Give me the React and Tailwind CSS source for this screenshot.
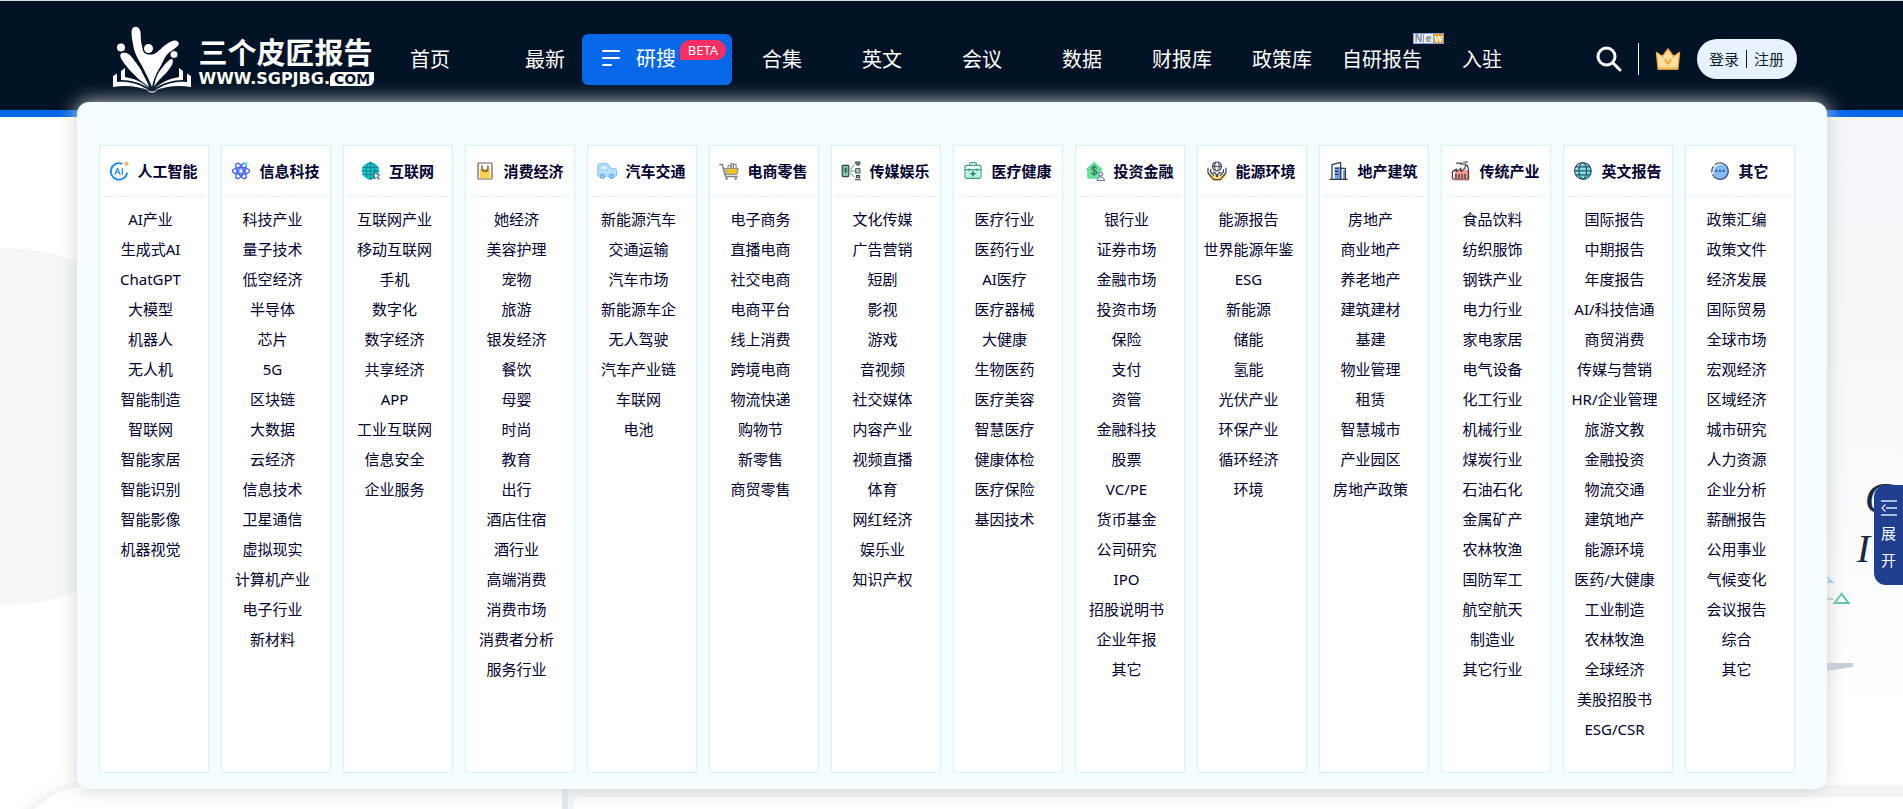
import React from 'react';

const Icon = ({ children }) => (
  <svg className="h-5 w-5 shrink-0" viewBox="0 0 20 20" fill="none" strokeLinecap="round" strokeLinejoin="round">
    {children}
  </svg>
);

const AiIcon = () => (
  <Icon>
    <path d="M12.600 2.600A8.200 8.200 0 1 0 18 12.400" stroke="#1a86f8" strokeWidth="1.900" />
    <path d="M6 13.200L8.200 7.400h.6l2.200 5.800M6.800 11.400h3.400M13.400 7.400v5.800" stroke="#3a97f7" strokeWidth="1.400" />
    <path d="M17.600.4l.7 1.600 1.500.8-1.500.8-.7 1.600-.8-1.600-1.600-.8 1.600-.8z" fill="#fba832" stroke="#fba832" strokeWidth=".5" />
  </Icon>
);

const AtomIcon = () => (
  <Icon>
    <g stroke="#4a69f5" strokeWidth="1.500">
      <ellipse cx="10" cy="10" rx="8.600" ry="3.400" />
      <ellipse cx="10" cy="10" rx="8.600" ry="3.400" transform="rotate(60 10 10)" />
      <ellipse cx="10" cy="10" rx="8.600" ry="3.400" transform="rotate(120 10 10)" />
    </g>
    <circle cx="10" cy="10" r="2.200" fill="#fff" stroke="#4a69f5" strokeWidth="1" />
    <circle cx="15" cy="2.800" r="1.800" fill="#6ff0dc" />
  </Icon>
);

const WebIcon = () => (
  <Icon>
    <circle cx="9.500" cy="9.800" r="8.600" fill="#12c6cd" />
    <g stroke="#137f88" strokeWidth="1">
      <path d="M1.600 6.400h15.800M1 10h17M1.600 13.600h15.800M9.500 1.400v17" />
      <ellipse cx="9.500" cy="9.800" rx="4.400" ry="8.400" />
    </g>
    <path d="M13.200 12l5.600 2.400-2.200.9 2 2.600-1 .8-2-2.700-1.500 1.800z" fill="#fff" stroke="#56606b" strokeWidth=".9" />
  </Icon>
);

const BagIcon = () => (
  <Icon>
    <rect x="3" y="2" width="14" height="16" rx=".8" fill="#fffaf0" stroke="#7b5b57" strokeWidth="1.200" />
    <path d="M5 8h10v9.200H5z" fill="#ffcf4d" />
    <path d="M7 5v2.500c0 3.600 6 3.600 6 0V5" stroke="#6a4b47" strokeWidth="1.300" />
  </Icon>
);

const CarIcon = () => (
  <Icon>
    <path d="M.8 14V4.400c0-1.200.6-2 1.800-2h7.200c1 0 1.500.5 2 1.400l2 3.600h3.400c1.400 0 2.300.8 2.300 2.200v4.600c0 .6-.4 1-1 1H2c-.8 0-1.200-.5-1.200-1.200z" fill="#b8defe" stroke="#7fc1fb" strokeWidth="1" />
    <path d="M3.600 4.800h5.600l2 3.800H3.600z" fill="#eaf6ff" stroke="#8ccaff" strokeWidth=".8" />
    <circle cx="5.400" cy="15.200" r="2.600" fill="#62b0fa" />
    <circle cx="14.600" cy="15.200" r="2.600" fill="#62b0fa" />
    <circle cx="5.400" cy="15.200" r=".9" fill="#d9eeff" />
    <circle cx="14.600" cy="15.200" r=".9" fill="#d9eeff" />
  </Icon>
);

const CartIcon = () => (
  <Icon>
    <path d="M.8 3.600h2.600l3.200 12h11.600" stroke="#84807d" strokeWidth="1.500" />
    <path d="M4.400 7.400h14.800v1.200L18 13.400H6z" fill="#b5afa9" stroke="#77716c" strokeWidth=".7" />
    <path d="M8 8h9.600v4.400H8z" fill="#f6c416" />
    <path d="M9 7V4.400h3.200V7M12 6.800V2.600h2.400v4.200M14.600 7V3.400h2.600V7" stroke="#6b6662" strokeWidth=".8" fill="#f1efec" />
    <circle cx="7.600" cy="17.600" r="1.300" fill="#8b8682" />
    <circle cx="16.800" cy="17.600" r="1.300" fill="#8b8682" />
  </Icon>
);

const MediaIcon = () => (
  <Icon>
    <rect x="1.200" y="4.400" width="6.600" height="11.200" rx=".8" fill="#7fc9a5" stroke="#2f4a43" strokeWidth="1.200" />
    <path d="M3 8h3M3 10.200h3M4.600 7v4.600" stroke="#2f4a43" strokeWidth=".8" />
    <path d="M9.600 10h3.400M9.600 8l3.600-4M9.600 12.200l3.600 4" stroke="#5c6b66" strokeWidth="1" strokeDasharray="1.400 1" />
    <path d="M14.800.9h4.200v2l-2.100 1.800-2.100-1.800z" fill="#5f8677" stroke="#36413d" strokeWidth=".8" />
    <rect x="15" y="7.600" width="4" height="4.400" fill="#9fd8bd" stroke="#36413d" strokeWidth=".9" />
    <path d="M15.400 14.600h3.200v2.200h-3.200zM14.200 18.800h5.600" fill="#9fd8bd" stroke="#36413d" strokeWidth="1.100" />
  </Icon>
);

const MedicalIcon = () => (
  <Icon>
    <path d="M3.400 9h13.200v8.600H3.400z" fill="#b9f0e2" />
    <rect x="2" y="4.400" width="16" height="13" rx="1.800" stroke="#419e8d" strokeWidth="1.200" />
    <path d="M6.600 4.200V3c0-.8.5-1.400 1.300-1.400h4.200c.8 0 1.300.6 1.300 1.400v1.200M2 8.600h16M6 7.600v2M14 7.600v2" stroke="#419e8d" strokeWidth="1.200" />
    <path d="M10 10.800v4M8 12.800h4" stroke="#23806f" strokeWidth="1.500" />
  </Icon>
);

const FinanceIcon = () => (
  <Icon>
    <path d="M9 .8l9 7.400-1.800 1.600v6.800c0 .8-.5 1.200-1.200 1.200H3.400c-.8 0-1.200-.5-1.200-1.200V9.800L.4 8.400z" fill="#67e09c" />
    <path d="M11.600 7.200c-.5-1-1.400-1.400-2.400-1.400-1.400 0-2.400.7-2.400 1.800 0 2.700 5 1.200 5 4 0 1.100-1.100 1.800-2.600 1.800-1.200 0-2.200-.5-2.700-1.500M9.200 4.600v10" stroke="#3f6f62" strokeWidth="1.200" />
    <circle cx="15.800" cy="13" r="1.900" fill="#eef1fa" stroke="#56608a" strokeWidth=".9" />
    <path d="M12.200 19.200c0-4.600 7.200-4.600 7.200 0z" fill="#eef1fa" stroke="#56608a" strokeWidth=".9" />
  </Icon>
);

const EnergyIcon = () => (
  <Icon>
    <path d="M2 12l5 2.400h6l5-2.400 1 3-4 4.400H5.600L1.400 15z" fill="#ffd772" />
    <circle cx="10" cy="5.400" r="4.400" fill="#e6e9f4" stroke="#3d4056" strokeWidth="1.200" />
    <path d="M5.800 5.400h8.400M8.400 1.400c-1 2.400-1 5.600 0 8M11.600 1.400c1 2.400 1 5.600 0 8" stroke="#3d4056" strokeWidth=".9" />
    <path d="M1 7v5l5 5.600M3.600 8.600v2.400l3.200 3.400M19 7v5l-5 5.600M16.400 8.600v2.400l-3.200 3.400M6.400 11.400c1.800.4 3.200 2 3.200 4M13.600 11.400c-1.800.4-3.200 2-3.200 4M6.400 18.600h7.200" stroke="#3d4056" strokeWidth="1.200" />
  </Icon>
);

const BuildingIcon = () => (
  <Icon>
    <path d="M5.600 6h7v12h-7zM14 9h3v9h-3z" fill="#6fa0f4" />
    <path d="M3 18V3.600l8.600-2.200V18M11.600 7.400h4.800V18" stroke="#3a3f4c" strokeWidth="1.300" />
    <path d="M6.400 7.400h2.600M6.400 10.400h2.600M6.400 13.400h2.600M1 18.400h17" stroke="#333845" strokeWidth="1.300" />
  </Icon>
);

const FactoryIcon = () => (
  <Icon>
    <path d="M4 9h14.400v10.400H3z" fill="#f79c86" />
    <path d="M1.400 18V10.600c2-.4 3-2 4-2.600v2.600l4.400-3.400v3.400l4-3 .6-3h2.200l.8 4.400V18z" stroke="#46394f" strokeWidth="1.200" />
    <path d="M5 13.400v3M8 13.400v3M11 13.400v3M14 13.400v3" stroke="#46394f" strokeWidth="1.400" />
    <path d="M5.600 2.400c1.800-1.600 2.800 1 4.600-.4M10.200 3.400c1.800-1.600 3 1 5-.6M12.600 1h4" stroke="#46394f" strokeWidth="1.100" />
  </Icon>
);

const GlobeIcon = () => (
  <Icon>
    <circle cx="11" cy="11" r="8.200" fill="#7fe3e6" />
    <circle cx="9.800" cy="9.800" r="8.200" stroke="#33506a" strokeWidth="1.300" />
    <ellipse cx="9.800" cy="9.800" rx="3.800" ry="8.200" stroke="#33506a" strokeWidth="1.200" />
    <path d="M3 5.800h13.600M1.600 9.800h16.400M3 13.800h13.600" stroke="#33506a" strokeWidth="1.200" />
  </Icon>
);

const ChatIcon = () => (
  <Icon>
    <circle cx="11" cy="11.200" r="7.600" fill="#84bdfb" />
    <path d="M5.400 3.400a8.200 8.200 0 1 1-2.800 10.200M1.800 11a8.200 8.200 0 0 1 1.400-5.400" stroke="#4b5170" strokeWidth="1.300" />
    <g fill="#3b4168">
      <circle cx="6.400" cy="9.800" r="1.100" />
      <circle cx="10" cy="9.800" r="1.100" />
      <circle cx="13.600" cy="9.800" r="1.100" />
    </g>
  </Icon>
);

const categories = [
  { title: '人工智能', icon: AiIcon, items: ['AI产业', '生成式AI', 'ChatGPT', '大模型', '机器人', '无人机', '智能制造', '智联网', '智能家居', '智能识别', '智能影像', '机器视觉'] },
  { title: '信息科技', icon: AtomIcon, items: ['科技产业', '量子技术', '低空经济', '半导体', '芯片', '5G', '区块链', '大数据', '云经济', '信息技术', '卫星通信', '虚拟现实', '计算机产业', '电子行业', '新材料'] },
  { title: '互联网', icon: WebIcon, items: ['互联网产业', '移动互联网', '手机', '数字化', '数字经济', '共享经济', 'APP', '工业互联网', '信息安全', '企业服务'] },
  { title: '消费经济', icon: BagIcon, items: ['她经济', '美容护理', '宠物', '旅游', '银发经济', '餐饮', '母婴', '时尚', '教育', '出行', '酒店住宿', '酒行业', '高端消费', '消费市场', '消费者分析', '服务行业'] },
  { title: '汽车交通', icon: CarIcon, items: ['新能源汽车', '交通运输', '汽车市场', '新能源车企', '无人驾驶', '汽车产业链', '车联网', '电池'] },
  { title: '电商零售', icon: CartIcon, items: ['电子商务', '直播电商', '社交电商', '电商平台', '线上消费', '跨境电商', '物流快递', '购物节', '新零售', '商贸零售'] },
  { title: '传媒娱乐', icon: MediaIcon, items: ['文化传媒', '广告营销', '短剧', '影视', '游戏', '音视频', '社交媒体', '内容产业', '视频直播', '体育', '网红经济', '娱乐业', '知识产权'] },
  { title: '医疗健康', icon: MedicalIcon, items: ['医疗行业', '医药行业', 'AI医疗', '医疗器械', '大健康', '生物医药', '医疗美容', '智慧医疗', '健康体检', '医疗保险', '基因技术'] },
  { title: '投资金融', icon: FinanceIcon, items: ['银行业', '证券市场', '金融市场', '投资市场', '保险', '支付', '资管', '金融科技', '股票', 'VC/PE', '货币基金', '公司研究', 'IPO', '招股说明书', '企业年报', '其它'] },
  { title: '能源环境', icon: EnergyIcon, items: ['能源报告', '世界能源年鉴', 'ESG', '新能源', '储能', '氢能', '光伏产业', '环保产业', '循环经济', '环境'] },
  { title: '地产建筑', icon: BuildingIcon, items: ['房地产', '商业地产', '养老地产', '建筑建材', '基建', '物业管理', '租赁', '智慧城市', '产业园区', '房地产政策'] },
  { title: '传统产业', icon: FactoryIcon, items: ['食品饮料', '纺织服饰', '钢铁产业', '电力行业', '家电家居', '电气设备', '化工行业', '机械行业', '煤炭行业', '石油石化', '金属矿产', '农林牧渔', '国防军工', '航空航天', '制造业', '其它行业'] },
  { title: '英文报告', icon: GlobeIcon, items: ['国际报告', '中期报告', '年度报告', 'AI/科技信通', '商贸消费', '传媒与营销', 'HR/企业管理', '旅游文教', '金融投资', '物流交通', '建筑地产', '能源环境', '医药/大健康', '工业制造', '农林牧渔', '全球经济', '美股招股书', 'ESG/CSR'] },
  { title: '其它', icon: ChatIcon, items: ['政策汇编', '政策文件', '经济发展', '国际贸易', '全球市场', '宏观经济', '区域经济', '城市研究', '人力资源', '企业分析', '薪酬报告', '公用事业', '气候变化', '会议报告', '综合', '其它'] },
];

const navItems = ['合集', '英文', '会议', '数据', '财报库', '政策库', '自研报告', '入驻'];

const Logo = () => (
  <a href="#" className="flex items-center text-white">
    <svg className="h-[67px] w-[78px] shrink-0" viewBox="0 0 78 67" fill="#fff">
      <path d="M18.500 6C18.500-1 26.500-1 27.500 6c.5 5 0 9 1.500 14 1.500 6 6 9 10 8.500 4-.5 8-5 12-8.500 4-3 7-5 10-5.500 4-.5 6 2.500 4 5-2 3-7 5-10 8-3 3-5 8-7.500 13C44 46 41 52 39 61c-3-8-7-15-10.500-22C24 31 21 26 20 18c-.8-4-1.500-8-1.500-12z" />
      <circle cx="35.500" cy="22.500" r="5.200" stroke="#001225" strokeWidth="1.400" />
      <circle cx="8" cy="21.500" r="4" />
      <circle cx="61" cy="28.500" r="3.800" stroke="#001225" strokeWidth=".6" />
      <path d="M7 28c3-3.500 9-2 13 4 5 7 8 10 10.500 16 2.500 5 5 9 6.500 14-5-4-9-6-13-10-5-5-9-9-12-13-3-4-6-8-5-11z" stroke="#001225" strokeWidth="1" />
      <path d="M59.500 32.500c2 3 0 7-2.500 10-2.500 4-5 6-8 9-4 4-6 7-8.500 10.500.5-6 2-11 5-16 3-4 5-7 8-10 2-2 4-4 6-3.500z" stroke="#001225" strokeWidth="1" />
      <path d="M0 50l4-2.500v8.500c12-1.500 23 2 33 9C26 60 12 59 0 61zM8 45l4-3v9c9 1.500 17 5 24 11-8-5-18-8-28-8zM78 50l-4-2.500v8.500c-12-1.500-23 2-33 9 11-5 25-6 37-4zM70 45l-4-3v9c-9 1.500-17 5-24 11 8-5 18-8 28-8z" />
      <path d="M34 64.500c3 1.200 7 1.200 10 0l-3 2h-4z" />
    </svg>
    <span className="mt-1 ml-2 flex flex-col">
      <span className="whitespace-nowrap text-[29px] leading-9 font-bold">三个皮匠报告</span>
      <span className="flex items-center whitespace-nowrap font-['DejaVu_Sans'] text-base leading-4 font-bold">
        WWW.SGPJBG.
        <span className="rounded-tl-md rounded-br-md bg-white px-1 text-sm leading-[14px] text-[#001225]">COM</span>
      </span>
    </span>
  </a>
);

const Header = () => (
  <header className="h-[117px] border-t border-b-[7px] border-t-[#dcdfdf] border-b-[#0767e9] bg-[#001225] text-white">
    <div className="mx-auto flex h-[116px] max-w-[1690px] items-center justify-between">
      <div className="ml-[6px] flex items-center">
        <Logo />
        <nav className="ml-1 flex items-center text-center text-xl leading-[51px] whitespace-nowrap">
          <a href="#" className="w-[104px]">首页</a>
          <a href="#" className="w-[100px] pl-[26px]">最新</a>
          <a href="#" className="relative flex w-[150px] items-center rounded-md bg-[#0767e9] pb-[2px] pl-5 leading-[49px]">
            <svg className="mr-4 h-[18px] w-[18px]" viewBox="0 0 18 18" stroke="#fff" strokeWidth="2" strokeLinecap="round">
              <path d="M1 2h16M1 9h16M1 16h8" />
            </svg>
            研搜
            <span className="absolute top-[6px] right-[6px] rounded-t-full rounded-br-full bg-[#ff2f63] px-2 text-[13px] leading-5">BETA</span>
          </a>
          {navItems.map(item => (
            <a key={item} href="#" className="relative w-[100px]">
              {item}
              {item === '自研报告' && (
                <span className="absolute -top-px -right-3 flex h-[11px] w-[31px] border border-[#7ba3d6] bg-[#7ba3d6] text-[10px] leading-[8px] font-bold">
                  <span className="flex-1 bg-[#eef0f3] text-[#8b9096]">N</span>
                  <span className="mx-px flex-1 bg-[#eef0f3] text-[#8b9096]">e</span>
                  <span className="flex-1 bg-[#f5a01d]">w</span>
                </span>
              )}
            </a>
          ))}
        </nav>
      </div>
      <div className="flex items-center">
        <button aria-label="搜索">
          <svg className="h-[26px] w-[26px]" viewBox="0 0 26 26" fill="none" stroke="#fff" strokeWidth="3" strokeLinecap="round">
            <circle cx="10.500" cy="10.500" r="8.500" />
            <path d="M17 17l7 7" />
          </svg>
        </button>
        <span className="ml-4 h-8 w-px bg-white" />
        <a href="#" aria-label="会员" className="ml-4">
          <svg className="h-6 w-[26px]" viewBox="0 0 26 24" strokeLinejoin="round">
            <path d="M1.500 5.500l6 4L13 2l5.500 7.500 6-4L22.800 22H3.200z" fill="#ffdf9f" stroke="#e9aa4b" strokeWidth="1.500" />
            <path d="M3 20.500h20v2H3z" fill="#f5b544" />
            <path d="M10 12.500l3 4.500 3-4.500" fill="none" stroke="#f0a92f" strokeWidth="1.800" strokeLinecap="round" />
          </svg>
        </a>
        <button className="ml-4 flex h-10 w-[100px] items-center justify-center rounded-full bg-[#e8f2fe] text-[15px] whitespace-nowrap text-[#0d1a2c]">
          登录<span className="mx-[7px] h-[18px] w-px bg-[#0d1a2c]" />注册
        </button>
      </div>
    </div>
  </header>
);

const CategoryCard = ({ title, icon: TitleIcon, items }) => (
  <section className="border border-[#d2f3f9] bg-white px-1 pb-7 text-center text-[15px] whitespace-nowrap text-[#00002e]">
    <h2 className="mb-[7px] flex h-[51px] items-center justify-center gap-2 border-b border-dashed border-[#cdeefb] font-bold">
      <TitleIcon />
      {title}
    </h2>
    <ul className="-ml-1 pr-[2px]">
      {items.map(item => (
        <li key={item} className="leading-[30px]">
          <a href="#" className="hover:text-blue-600">{item}</a>
        </li>
      ))}
    </ul>
  </section>
);

const MegaMenu = () => (
  <div className="absolute inset-x-0 top-[102px] z-10">
    <div className="mx-auto grid max-w-[1750px] grid-cols-14 gap-3 rounded-xl bg-[#f4fcff] pt-[43px] pr-8 pb-4 pl-[22px] shadow-[0_0_20px_#d0d0d0]">
      {categories.map(category => (
        <CategoryCard key={category.title} {...category} />
      ))}
    </div>
  </div>
);

// soft shapes and lettering behind the menu
const Backdrop = () => (
  <div className="absolute inset-x-0 top-[117px] bottom-0 overflow-hidden">
    <div className="absolute inset-y-0 right-0 w-1/2 bg-linear-to-b from-[#f3f6fa] via-[#f8fafc] to-white to-85%" />
    <div className="absolute top-[131px] -left-[170px] h-[357px] w-[357px] rounded-full bg-[#f4f7fa]" />
    <div className="absolute top-[668px] left-[5px] h-[180px] w-[557px] rounded-tl-[90px] bg-white shadow-[0_0_16px_#dfe3ea]" />
    <div className="absolute top-[668px] right-0 left-[562px] h-[40px] border-l-[6px] border-[#e1e7ef] bg-[#f3f4f6] pt-3 pl-[6px]">
      <div className="h-10 rounded-tl-lg bg-white" />
    </div>
    <span className="absolute top-[357px] right-[9px] font-['Liberation_Serif'] text-[44px] leading-[50px] text-[#17293f] italic">C</span>
    <span className="absolute top-[407px] right-[33px] font-['Liberation_Serif'] text-[40px] leading-[50px] text-[#17293f] italic">I</span>
    <svg className="absolute top-[453px] right-[47px] h-[102px] w-[36px]" viewBox="0 0 36 102" fill="none">
      <path d="M0 1l12 11H0" stroke="#8fc6ea" strokeWidth="2" />
      <path d="M21.500 24l-7 9h14z" stroke="#63c1ad" strokeWidth="2" />
      <path d="M6 29h7" stroke="#c0c5cb" strokeWidth="2" />
      <path d="M0 93h33v4L0 102z" fill="#c6cedb" />
    </svg>
  </div>
);

const SideTab = () => (
  <button className="absolute top-[485px] right-0 z-20 flex h-[100px] w-[29px] flex-col items-center rounded-l-xl bg-[#203f8f] pt-[15px] text-[15px] leading-[27px] text-white">
    <svg className="mb-1 h-4 w-4 shrink-0" viewBox="0 0 16 16" fill="none" stroke="#dfe6f7" strokeWidth="1.300">
      <path d="M0 1h16M5 8h11M0 15h16M4.500 4.500L1 8l3.500 3.500" />
    </svg>
    <span>展</span>
    <span>开</span>
  </button>
);

const App = () => {
  return (
    <div className="relative min-h-screen overflow-hidden bg-white font-['Noto_Sans','Noto_Sans_CJK_SC',sans-serif]">
      <Header />
      <Backdrop />
      <MegaMenu />
      <SideTab />
    </div>
  );
};

export default App;
